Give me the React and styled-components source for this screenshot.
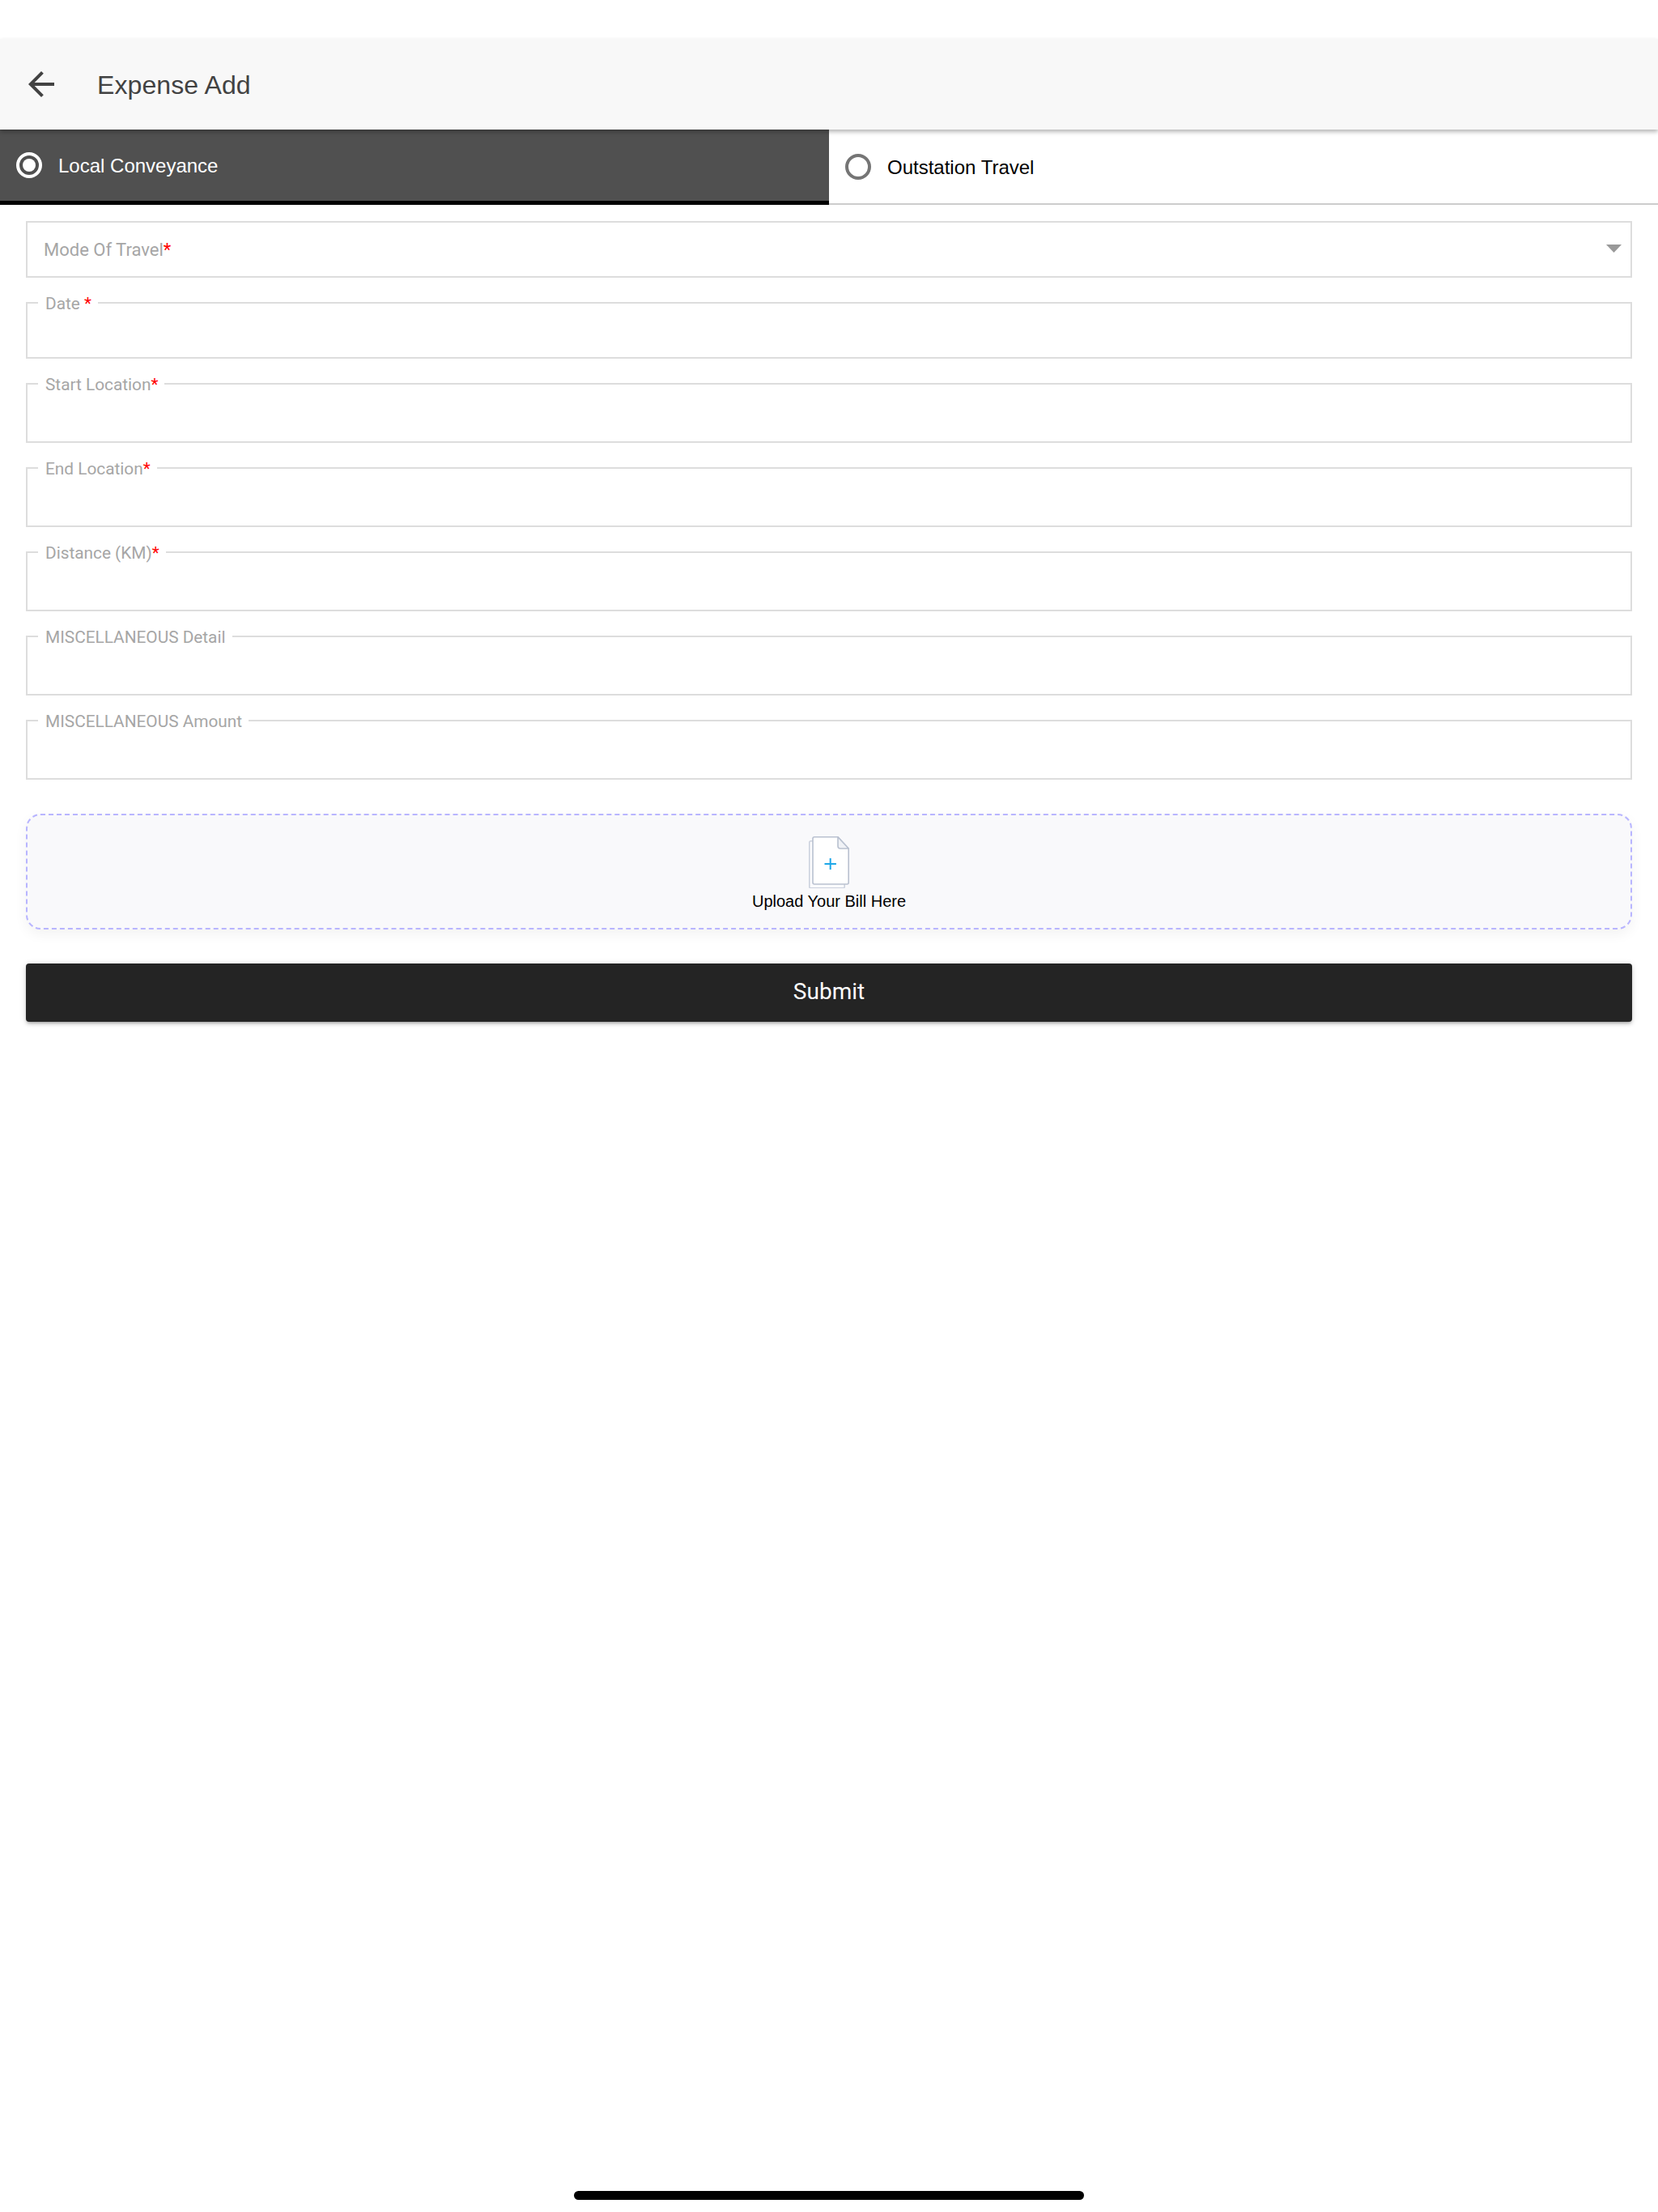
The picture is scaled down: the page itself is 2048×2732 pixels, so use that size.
import React from "react"
import styled, { createGlobalStyle } from "styled-components"

const GlobalStyle = createGlobalStyle`
  html, body {
    margin: 0;
    padding: 0;
    background: #fff;
  }
  * {
    box-sizing: border-box;
  }
`

const Page = styled.div`
  position: relative;
  height: 2732px;
  padding-top: 48px;
  font-family: "Liberation Sans", Arial, sans-serif;
`

const Header = styled.header`
  position: relative;
  z-index: 2;
  display: flex;
  align-items: center;
  height: 112px;
  padding-left: 27px;
  background: #f8f8f8;
  box-shadow: 0 3px 5px rgba(0, 0, 0, 0.28);
`

const BackIcon = styled.svg`
  width: 48px;
  height: 48px;
  fill: #424242;
`

const Title = styled.h1`
  margin: 2px 0 0 45px;
  font-size: 32px;
  font-weight: 400;
  letter-spacing: 0.1px;
  color: #424242;
`

const Tabs = styled.div`
  display: flex;
  height: 93px;
`

const Tab = styled.div`
  flex: 1;
  display: flex;
  align-items: center;
  gap: 20px;
  padding-left: 20px;
  padding-top: ${(p) => (p.$active ? "0" : "1px")};
  font-size: 24px;
  color: ${(p) => (p.$active ? "#fff" : "#000")};
  background: ${(p) => (p.$active ? "#505050" : "#fff")};
  border-bottom: ${(p) => (p.$active ? "5px solid #000" : "2px solid #ccc")};
`

const TabLabel = styled.span`
  padding-top: 2px;
`

const Radio = styled.span`
  position: relative;
  width: 32px;
  height: 32px;
  border-radius: 50%;
  border: 4px solid ${(p) => (p.$active ? "#fff" : "#757575")};

  &::after {
    content: "";
    display: ${(p) => (p.$active ? "block" : "none")};
    position: absolute;
    inset: 4px;
    border-radius: 50%;
    background: #fff;
  }
`

const Form = styled.div`
  display: flex;
  flex-direction: column;
  padding: 20px 32px 0;
`

const Select = styled.div`
  display: flex;
  align-items: center;
  justify-content: space-between;
  height: 70px;
  padding: 0 11px 0 20px;
  border: 2px solid #ddd;
  font-family: Roboto, sans-serif;
  font-size: 22px;
  color: #a6a6a6;
`

const Caret = styled.svg`
  width: 19px;
  height: 10px;
  margin-bottom: 2px;
  fill: #999;
`

const Required = styled.span`
  color: #f00;
`

const Field = styled.fieldset`
  height: ${(p) => p.$height}px;
  margin: ${(p) => p.$top}px 0 0;
  padding: 0;
  border: 2px solid #ddd;
`

const Legend = styled.legend`
  margin-left: 13px;
  padding: 2px 8px 0 9px;
  font-family: Roboto, sans-serif;
  font-size: 20.8px;
  line-height: 24px;
  color: #a6a6a6;
`

const Upload = styled.div`
  display: flex;
  flex-direction: column;
  align-items: center;
  height: 143px;
  margin-top: 42px;
  padding-top: 26px;
  background: #f9f9fb;
  border: 2px dashed #b8b5ff;
  border-radius: 18px;
  box-shadow: 0 6px 16px rgba(0, 0, 0, 0.05);
`

const FileIcon = styled.svg`
  width: 50px;
  height: 64px;
  display: block;
`

const UploadText = styled.div`
  margin-top: 4px;
  font-size: 20px;
  line-height: 24px;
  color: #000;
`

const Submit = styled.button`
  height: 72px;
  margin-top: 42px;
  padding-bottom: 4px;
  border: 0;
  border-radius: 4px;
  background: #242424;
  color: #fff;
  font-family: Roboto, sans-serif;
  font-size: 28px;
  box-shadow: 0 3px 3px -2px rgba(0, 0, 0, 0.2), 0 3px 4px rgba(0, 0, 0, 0.14), 0 1px 8px rgba(0, 0, 0, 0.12);
`

const HomeBar = styled.div`
  position: absolute;
  left: 709px;
  top: 2706px;
  width: 630px;
  height: 11px;
  border-radius: 6px;
  background: #000;
`

const fields = [
  { label: "Date ", required: true, height: 82, top: 18 },
  { label: "Start Location", required: true, height: 86, top: 18 },
  { label: "End Location", required: true, height: 86, top: 18 },
  { label: "Distance (KM)", required: true, height: 86, top: 18 },
  { label: "MISCELLANEOUS Detail", height: 86, top: 18 },
  { label: "MISCELLANEOUS Amount", height: 86, top: 18 },
]

export default () => (
  <Page>
    <GlobalStyle />
    <Header>
      <BackIcon viewBox="0 0 24 24">
        <path d="M20 11H7.83l5.59-5.59L12 4l-8 8 8 8 1.41-1.41L7.83 13H20v-2z" />
      </BackIcon>
      <Title>Expense Add</Title>
    </Header>
    <Tabs>
      <Tab $active>
        <Radio $active />
        <TabLabel>Local Conveyance</TabLabel>
      </Tab>
      <Tab>
        <Radio />
        <TabLabel>Outstation Travel</TabLabel>
      </Tab>
    </Tabs>
    <Form>
      <Select>
        <span>
          Mode Of Travel<Required>*</Required>
        </span>
        <Caret viewBox="0 0 19 10">
          <path d="M0 0h19L9.5 10z" />
        </Caret>
      </Select>
      {fields.map(({ label, required, height, top }) => (
        <Field key={label} $height={height} $top={top}>
          <Legend>
            {label}
            {required && <Required>*</Required>}
          </Legend>
        </Field>
      ))}
      <Upload>
        <FileIcon viewBox="0 0 50 64">
          <path d="M5 5.8H2.5A1.7 1.7 0 0 0 .8 7.5v54.7a1.7 1.7 0 0 0 1.7 1.7h40a1.7 1.7 0 0 0 1.7-1.7V59" fill="#fbfbfd" stroke="#ccd2de" strokeWidth="1.6" />
          <path d="M7 .8h29L49.2 15v42a2 2 0 0 1-2 2H7a2 2 0 0 1-2-2V2.8a2 2 0 0 1 2-2z" fill="#fff" stroke="#b9c1d0" strokeWidth="1.6" />
          <path d="M36 .8V12a3 3 0 0 0 3 3h10.2z" fill="#f0f2f6" stroke="#b9c1d0" strokeWidth="1.6" strokeLinejoin="round" />
          <path d="M26.7 27v14M19.5 34h14.4" stroke="#1ea7e8" strokeWidth="2" fill="none" />
        </FileIcon>
        <UploadText>Upload Your Bill Here</UploadText>
      </Upload>
      <Submit type="button">Submit</Submit>
    </Form>
    <HomeBar />
  </Page>
)
